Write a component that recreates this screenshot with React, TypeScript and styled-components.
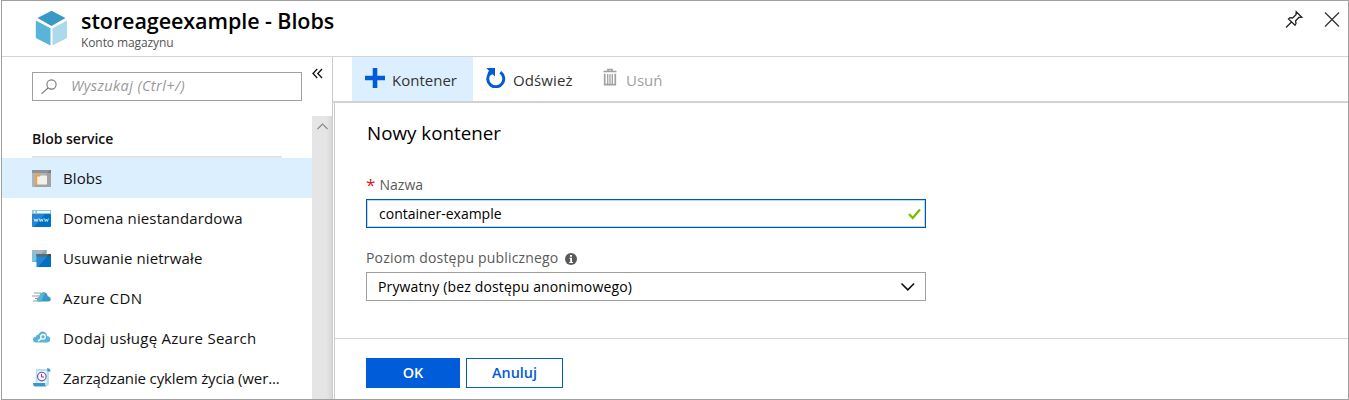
import React from 'react';
import styled, { createGlobalStyle, css } from 'styled-components';

const Global = createGlobalStyle`
  * { box-sizing: border-box; }
  body { margin: 0; background: #fff; overflow: hidden; }
  button, input { font: inherit; }
  svg { display: block; flex: none; }
`;

const Blade = styled.div`
  width: 1348px;
  height: 400px;
  margin-left: 1px;
  border: 1px solid #a0a0a0;
  display: flex;
  flex-direction: column;
  font-family: 'Open Sans', 'Noto Sans', sans-serif;
  font-size: 14px;
  color: #111;
  background: #fff;
  white-space: nowrap;
`;

const Header = styled.header`
  height: 56px;
  flex: none;
  border-bottom: 1px solid #d4d4d4;
  display: flex;
  padding: 9px 8px 0 33px;
`;

const Titles = styled.div`
  flex: 1;
  margin-left: 12px;
`;

const Title = styled.h1`
  margin: -3px 0 0;
  font-size: 21.5px;
  line-height: 28px;
  font-weight: 600;
  letter-spacing: -0.07px;
  color: #000;
`;

const Subtitle = styled.div`
  font-size: 12px;
  line-height: 16px;
  letter-spacing: -0.1px;
  color: #555;
`;

const WindowTools = styled.div`
  display: flex;
  gap: 21px;
`;

const Body = styled.div`
  flex: 1;
  min-height: 0;
  display: flex;
`;

const Sidebar = styled.aside`
  width: 331px;
  flex: none;
  border-right: 1px solid #ccc;
  display: flex;
  flex-direction: column;
`;

const SearchRow = styled.div`
  height: 59px;
  flex: none;
  padding: 15px 9px 0 30px;
  display: flex;
  justify-content: space-between;
`;

const SearchBox = styled.div`
  width: 270px;
  height: 29px;
  border: 1px solid #a0a0a0;
  display: flex;
  align-items: center;
  padding: 0 8px 2px;
  gap: 14px;
  font-size: 14.5px;
  font-style: italic;
  color: #999;
`;

const Collapse = styled.div`
  margin-top: -4px;
`;

const MenuArea = styled.div`
  flex: 1;
  min-height: 0;
  display: flex;
`;

const Menu = styled.nav`
  flex: 1;
  min-width: 0;
`;

const Scrollbar = styled.div`
  width: 20px;
  background: linear-gradient(90deg, #e5e5e5 14px, #d8d8d8 20px);
  padding: 7px 0 0 5px;
`;

const Section = styled.div`
  margin: 0 30px;
  height: 42px;
  line-height: 46px;
  border-bottom: 2px solid #e4e4e4;
  font-weight: 600;
  font-size: 14px;
`;

const Item = styled.div<{ $active?: boolean }>`
  height: 40px;
  display: flex;
  align-items: center;
  padding-left: 30px;
  background: ${(p) => (p.$active ? '#dceffe' : 'transparent')};
`;

const Label = styled.span<{ $spacing?: number }>`
  letter-spacing: ${(p) => p.$spacing ?? 0}px;
`;

const ItemLabel = styled(Label)`
  margin-left: 12px;
  font-size: 15px;
`;

const Main = styled.main`
  flex: 1;
  min-width: 0;
  display: flex;
  flex-direction: column;
`;

const Toolbar = styled.div`
  height: 46px;
  flex: none;
  border-bottom: 2px solid #d2d2d2;
  padding-left: 19px;
  display: flex;
`;

const Command = styled.div<{ $active?: boolean; $disabled?: boolean; $width: number; $gap: number }>`
  width: ${(p) => p.$width}px;
  display: flex;
  gap: ${(p) => p.$gap}px;
  padding: 11px 0 0 13px;
  line-height: 25px;
  font-size: 15px;
  color: ${(p) => (p.$disabled ? '#a0a0a0' : '#333')};
  background: ${(p) => (p.$active ? '#dceffe' : 'transparent')};
`;

const Panel = styled.section`
  flex: 1;
  margin-left: 1px;
  border-left: 1px solid #ccc;
  display: flex;
  flex-direction: column;
`;

const Form = styled.div`
  height: 236px;
  border-bottom: 1px solid #d4d4d4;
  padding: 16px 0 0 31px;
`;

const Heading = styled.h2`
  margin: 0 0 0 1px;
  font-size: 18.8px;
  line-height: 28px;
  font-weight: 400;
  color: #000;
`;

const FieldLabel = styled.div<{ $top: number }>`
  margin-top: ${(p) => p.$top}px;
  height: 20px;
  line-height: 20px;
  display: flex;
  align-items: center;
  color: #5a5a5a;
  font-size: 14px;
`;

const Required = styled.span`
  width: 13.5px;
  color: #e81123;
  font-size: 17px;
`;

const boxed = css`
  width: 560px;
  height: 29px;
  display: flex;
  align-items: center;
  justify-content: space-between;
  font-size: 14px;
  color: #000;
`;

const TextField = styled.div`
  ${boxed}
  margin-top: 4px;
  padding: 0 4px 0 12px;
  border: 1px solid #0058ad;
  box-shadow: inset 0 0 0 1px #b9d8f2;
`;

const Select = styled.div`
  ${boxed}
  margin-top: 4px;
  padding: 0 10px 0 11px;
  border: 1px solid #a0a0a0;
`;

const InfoBadge = styled.span`
  margin: 2px 0 0 7px;
`;

const Footer = styled.div`
  display: flex;
  gap: 6px;
  padding: 19px 0 0 31px;
`;

const Button = styled.button<{ $primary?: boolean }>`
  width: ${(p) => (p.$primary ? 94 : 97)}px;
  height: 30px;
  padding: 0 0 1px;
  border: 1px solid #015cda;
  background: ${(p) => (p.$primary ? '#015cda' : '#fff')};
  color: ${(p) => (p.$primary ? '#fff' : '#015cda')};
  font-size: 14.4px;
  font-weight: 600;
`;

const CubeIcon = () => (
  <svg width="34" height="36" viewBox="0 0 34 36">
    <path d="M16.500 .8 30.500 8 16.500 16 2.500 8Z" fill="#3999c6" />
    <path d="M.8 10.500 15.500 18.300V35.500L.8 28Z" fill="#59b4d9" />
    <path d="M32 10.500 17.500 18.300V35.500L32 28Z" fill="#addaeb" />
  </svg>
);

const PinIcon = () => (
  <svg width="18" height="18" viewBox="0 0 18 18" fill="none" stroke="#222" strokeWidth="1.300">
    <path d="M1 17.500 6.500 12M3.500 9 10 15.300 11 13.500 10.500 11 13.800 7.500 16.800 7.300 11.200 1.700 11 4.700 7.500 8 5 7.700Z" />
  </svg>
);

const CloseIcon = () => (
  <svg width="16" height="17" viewBox="0 0 16 17" stroke="#333" strokeWidth="1.300">
    <path d="M1 2.500 15 16.500M15 2.500 1 16.500" />
  </svg>
);

const SearchIcon = () => (
  <svg width="16" height="16" viewBox="0 0 16 16" fill="none" stroke="#777" strokeWidth="1.100">
    <circle cx="10.500" cy="6.500" r="4.600" />
    <path d="M7 10 .5 15.800" />
  </svg>
);

const CollapseIcon = () => (
  <svg width="11" height="11" viewBox="0 0 11 11" fill="none" stroke="#111" strokeWidth="1.300">
    <path d="M5.200 1 1 5.500 5.200 10M10 1 5.800 5.500 10 10" />
  </svg>
);

const BlobsIcon = () => (
  <svg width="19" height="17" viewBox="0 0 19 17">
    <rect width="19" height="17" rx=".7" fill="#a0a1a2" />
    <rect width="19" height="3" fill="#7a7a7a" />
    <path d="M0 0H18L2 17H0Z" fill="#fff" opacity=".18" />
    <path d="M3.500 4.500H7L8 6H14V14.500H3.500Z" fill="#fc9c2c" />
    <path d="M5.200 6.500H8L9 5.500H15V14.500H5.200Z" fill="#f0f0f0" />
  </svg>
);

const DomainIcon = () => (
  <svg width="19" height="17" viewBox="0 0 19 17">
    <rect width="19" height="17" rx=".7" fill="#0072c6" />
    <rect width="19" height="4" fill="#8cc5df" />
    <rect x="5" y="1" width="13" height="2" fill="#fff" />
    <circle cx="2.500" cy="2" r="1" fill="#fff" />
    <path d="M0 4H13L2 17H0Z" fill="#fff" opacity=".15" />
    <path d="m2 8.500 1 3 1-2.500 1 2.500 1-3m1.200 0 1 3 1-2.500 1 2.500 1-3m1.200 0 1 3 1-2.500 1 2.500 1-3" fill="none" stroke="#e5f2fb" strokeWidth=".8" />
  </svg>
);

const SoftDeleteIcon = () => (
  <svg width="19" height="17" viewBox="0 0 19 17">
    <path d="M0 0H14.500V12H0Z" fill="#59b4d9" />
    <path d="M0 0H14.500V2.500H0Z" fill="#a0a1a2" />
    <path d="M0 0H13L2 12H0Z" fill="#fff" opacity=".2" />
    <path d="M4.500 4H19V17H4.500Z" fill="#0072c6" />
    <path d="M4.500 4H19V6.500H4.500Z" fill="#4b4b4b" />
    <path d="M4.500 4H17L6 17H4.500Z" fill="#fff" opacity=".15" />
  </svg>
);

const CdnIcon = () => (
  <svg width="19" height="17" viewBox="0 0 19 17">
    <path d="M2 3H9M0 6H8M3 8.500H8M1 11H7" stroke="#999" strokeWidth="1.200" />
    <path d="M8 11.500Q5 11.500 5 9.500 5.200 7.300 7.500 7 7.800 2.500 11.500 2.200 15 2.200 15.800 6.300 19 7.300 18.800 9.700 18.500 11.500 16.500 11.500Z" fill="#3999c6" />
    <path d="M8 11.500Q5 11.500 5 9.500 5.200 7.300 7.500 7 7.800 2.500 11.500 2.200L13 3 9 11.500Z" fill="#59b4d9" />
  </svg>
);

const CloudSearchIcon = () => (
  <svg width="19" height="17" viewBox="0 0 19 17">
    <path d="M4 12.500Q1 12.300 1 9.500 1 7 3.800 6.700 4 4.500 6.500 4.400 8 1 11 1.500 14.500 2 15 6 18.500 6.500 18.200 9.500 18 12.500 15 12.500Z" fill="#59b4d9" />
    <circle cx="11" cy="6.800" r="2.300" fill="none" stroke="#fff" strokeWidth="1.300" />
    <path d="m9.200 8.500-3 2.600" stroke="#fff" strokeWidth="1.600" />
  </svg>
);

const LifecycleIcon = () => (
  <svg width="19" height="20" viewBox="0 0 19 20">
    <path d="M4 1H17V16Q16.500 18 15 18H3.500Z" fill="#b9e0f1" />
    <path d="M5.300 3H14.500V15H5.300Z" fill="#e8f5fb" />
    <path d="M15 .3Q18.500 0 18.500 3.500H15.500ZM1 15H13V16.500Q13 18.500 15 18.500H3.500Q1 18.500 1 15Z" fill="#3999c6" />
    <circle cx="9.800" cy="8.600" r="4.300" fill="#e8f5fb" stroke="#804998" strokeWidth="1.100" />
    <path d="M9.500 6V9H12" fill="none" stroke="#804998" />
  </svg>
);

const PlusIcon = () => (
  <svg width="20" height="20" viewBox="0 0 20 20" fill="#015cda">
    <path d="M7.700 0H12.300V7.700H20V12.300H12.300V20H7.700V12.300H0V7.700H7.700Z" />
  </svg>
);

const RefreshIcon = () => (
  <svg width="20" height="20" viewBox="0 0 20 20">
    <path d="M14.300 4.300A8 8 0 1 1 3.800 5.500" fill="none" stroke="#015cda" strokeWidth="3" />
    <path d="M.3 0H9V8.600L6.600 6.200 4 7.500 1.500 5.200 3 2.700Z" fill="#015cda" />
  </svg>
);

const TrashIcon = () => (
  <svg width="14" height="18" viewBox="0 0 14 18">
    <path d="M.5 3.500H13.500M5 3V1.500H9V3" fill="none" stroke="#a0a0a0" strokeWidth="1.700" />
    <path d="M1.700 5.700V16.700H12.300V5.700" fill="none" stroke="#a0a0a0" strokeWidth="1.700" />
    <path d="M4.700 6V16.500M7 6V16.500M9.300 6V16.500" stroke="#a0a0a0" strokeWidth="1.300" />
  </svg>
);

const InfoIcon = () => (
  <svg width="12" height="12" viewBox="0 0 12 12">
    <circle cx="6" cy="6" r="6" fill="#5a5a5a" />
    <path d="M5 2H7V3.700H5ZM4.500 4.800H7V9H8V10H4.200V9H5.200V5.700H4.500Z" fill="#fff" />
  </svg>
);

const CheckIcon = () => (
  <svg width="13" height="12" viewBox="0 0 13 12" fill="none" stroke="#7fba00" strokeWidth="2.200">
    <path d="M1 6 4.700 10 12 1.500" />
  </svg>
);

const ChevronIcon = () => (
  <svg width="15" height="9" viewBox="0 0 15 9" fill="none" stroke="#111" strokeWidth="1.600">
    <path d="M1.500 1.500 7.800 7.800 14.100 1.500" />
  </svg>
);

const ScrollUpIcon = () => (
  <svg width="11" height="7" viewBox="0 0 11 7" fill="none" stroke="#888" strokeWidth="1.100">
    <path d="M.5 6 5.500 1 10.500 6" />
  </svg>
);

const items = [
  { label: 'Blobs', icon: <BlobsIcon />, spacing: 0.1, active: true },
  { label: 'Domena niestandardowa', icon: <DomainIcon />, spacing: 0.13 },
  { label: 'Usuwanie nietrwałe', icon: <SoftDeleteIcon />, spacing: 0.1 },
  { label: 'Azure CDN', icon: <CdnIcon />, spacing: 0.4 },
  { label: 'Dodaj usługę Azure Search', icon: <CloudSearchIcon />, spacing: 0.28 },
  { label: 'Zarządzanie cyklem życia (wer...', icon: <LifecycleIcon />, spacing: -0.14 },
];

export default function App() {
  return (
    <>
      <Global />
      <Blade>
        <Header>
          <CubeIcon />
          <Titles>
            <Title>storeageexample - Blobs</Title>
            <Subtitle>Konto magazynu</Subtitle>
          </Titles>
          <WindowTools>
            <PinIcon />
            <CloseIcon />
          </WindowTools>
        </Header>
        <Body>
          <Sidebar>
            <SearchRow>
              <SearchBox>
                <SearchIcon />
                <Label $spacing={0.4}>Wyszukaj (Ctrl+/)</Label>
              </SearchBox>
              <Collapse>
                <CollapseIcon />
              </Collapse>
            </SearchRow>
            <MenuArea>
              <Menu>
                <Section>Blob service</Section>
                {items.map((item) => (
                  <Item key={item.label} $active={item.active}>
                    {item.icon}
                    <ItemLabel $spacing={item.spacing}>{item.label}</ItemLabel>
                  </Item>
                ))}
              </Menu>
              <Scrollbar>
                <ScrollUpIcon />
              </Scrollbar>
            </MenuArea>
          </Sidebar>
          <Main>
            <Toolbar>
              <Command $active $width={121} $gap={7}>
                <PlusIcon />
                <Label>Kontener</Label>
              </Command>
              <Command $width={117} $gap={7}>
                <RefreshIcon />
                <Label $spacing={0.1}>Odśwież</Label>
              </Command>
              <Command $disabled $width={90} $gap={9}>
                <TrashIcon />
                <Label>Usuń</Label>
              </Command>
            </Toolbar>
            <Panel>
              <Form>
                <Heading>Nowy kontener</Heading>
                <FieldLabel $top={28}>
                  <Required>*</Required>
                  <Label>Nazwa</Label>
                </FieldLabel>
                <TextField>
                  <Label>container-example</Label>
                  <CheckIcon />
                </TextField>
                <FieldLabel $top={20}>
                  <Label $spacing={0.18}>Poziom dostępu publicznego</Label>
                  <InfoBadge>
                    <InfoIcon />
                  </InfoBadge>
                </FieldLabel>
                <Select>
                  <Label $spacing={0.14}>Prywatny (bez dostępu anonimowego)</Label>
                  <ChevronIcon />
                </Select>
              </Form>
              <Footer>
                <Button $primary>OK</Button>
                <Button>Anuluj</Button>
              </Footer>
            </Panel>
          </Main>
        </Body>
      </Blade>
    </>
  );
}
